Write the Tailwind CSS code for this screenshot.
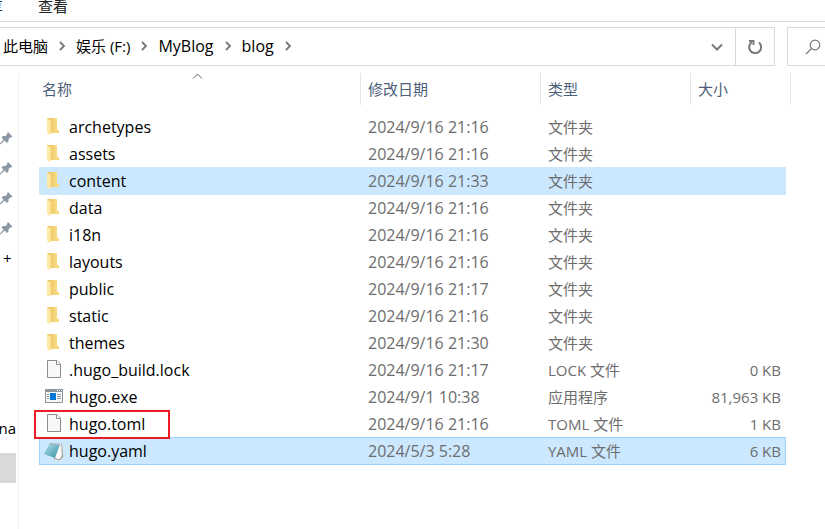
<!DOCTYPE html>
<html lang="zh-CN">
<head>
<meta charset="utf-8">
<title>blog</title>
<script src="https://cdn.jsdelivr.net/npm/@tailwindcss/browser@4"></script>
</head>
<body class="bg-white font-['Open_Sans','Noto_Sans_CJK_SC',sans-serif] text-[15px] leading-5 text-black">
<svg class="absolute size-0" aria-hidden="true">
  <defs>
    <linearGradient id="gold" x1="0" y1="0" x2="1" y2="0"><stop offset="0" stop-color="#e8bf5c"/><stop offset="1" stop-color="#fbdc82"/></linearGradient>
    <linearGradient id="teal" x1="0" y1="0" x2="1" y2="1"><stop offset="0" stop-color="#b3dde5"/><stop offset="1" stop-color="#3596a8"/></linearGradient>
  </defs>
  <symbol id="folder" viewBox="0 0 20 19">
    <path d="M3 1H13V16H6L3 15Z" fill="url(#gold)"/>
    <path d="M13 12.500l2 1V16h-2z" fill="#f9d572"/>
    <path d="M3 1L7 4V16L5.500 18L3 16Z" fill="#ffe9a6"/>
    <path d="M6.500 4V16.500" stroke="#fbdf8c"/>
  </symbol>
  <symbol id="file" viewBox="0 0 20 19">
    <path d="M3.500 .5H13L16.500 4V17.500H3.500Z" fill="#f8f8f8" stroke="#8c8c8c"/>
    <path d="M12.500 .5V4.500H16.500" fill="#fff" stroke="#8c8c8c"/>
  </symbol>
  <symbol id="exe" viewBox="0 0 20 19">
    <path d="M1.500 2.500H18.500V15.500H1.500Z" fill="#f8f8f8" stroke="#8b969b"/>
    <path d="M1 2H19V5H1Z" fill="#8b969b"/>
    <path d="M13 3.500h1M15 3.500h1M17 3.500h1" stroke="#fff"/>
    <path d="M6 6h6v7H6z" fill="#0078d7"/>
    <path d="M3 7.500h2M3 9.500h2M3 11.500h2M13 7.500h4M13 9.500h4M13 11.500h4" stroke="#8b969b"/>
  </symbol>
  <symbol id="note" viewBox="0 0 20 19">
    <path d="M13 3L18 1.500L19 15L16 18L10 17Z" fill="#9b8c6d"/>
    <path d="M16 2L17.500 2L18 14L16 17L10 16Z" fill="#e8f0f1"/>
    <path d="M6 1L16 2L11 16L0 12Z" fill="url(#teal)"/>
    <path d="M6 1L16 2L15.500 3.500L5.500 2.500Z" fill="#a8b8bc"/>
    <path d="M16 4L17 14L15 17L11.500 16Z" fill="#fff"/>
  </symbol>
  <symbol id="pin" viewBox="0 0 13 13">
    <path d="M8 0L12.500 4.500L11 5.500L10.500 5.200L8.500 7.200V9.500L7 11L4.500 8.500L1 12L0 12.500V11.500L3.500 7.500L1.500 5.500L3 4H5.500L7.500 2L7 1.200Z" fill="#8b98a3"/>
  </symbol>
  <symbol id="chevron" viewBox="0 0 8 10">
    <path d="M2 1L6 5L2 9" fill="none" stroke="#777" stroke-width="1.800"/>
  </symbol>
</svg>

<div class="flex min-h-screen flex-col overflow-hidden">
  <nav class="flex h-[22px] shrink-0 gap-[35px] overflow-hidden border-b border-[#dadbdc]" aria-label="功能区">
    <button class="-mt-1 -ml-3 h-5 text-[#1e395b]">享</button>
    <button class="-mt-1 h-5 text-[#222]">查看</button>
  </nav>

  <div class="mt-[5px] flex h-[39px] shrink-0 gap-3">
    <div class="flex min-w-0 flex-1 border border-l-0 border-[#d9d9d9]">
      <nav class="flex flex-1 items-center pb-[2px] pl-[3px]" aria-label="地址">
        <a href="#">此电脑</a>
        <svg class="mx-[10px] h-[10px] w-2"><use href="#chevron"/></svg>
        <a href="#">娱乐 (F:)</a>
        <svg class="mx-[10px] h-[10px] w-2"><use href="#chevron"/></svg>
        <a href="#" class="text-base leading-5">MyBlog</a>
        <svg class="mx-[10px] h-[10px] w-2"><use href="#chevron"/></svg>
        <a href="#" class="text-base leading-5">blog</a>
        <svg class="mx-[10px] h-[10px] w-2"><use href="#chevron"/></svg>
      </nav>
      <button class="flex w-9 items-center justify-center" aria-label="以前的位置">
        <svg class="h-2 w-3" viewBox="0 0 12 8"><path d="M1 1.500L6 6.500L11 1.500" fill="none" stroke="#777" stroke-width="2"/></svg>
      </button>
      <button class="flex w-[39px] items-center justify-center border-l border-[#d9d9d9]" aria-label="刷新">
        <svg class="size-4" viewBox="0 0 16 16"><path d="M12 3.500A6 6 0 1 1 5 3" fill="none" stroke="#777" stroke-width="2"/><path d="M2 2H6.500V6" fill="none" stroke="#777" stroke-width="1.800"/></svg>
      </button>
    </div>
    <div class="flex w-[38px] items-center justify-end border border-r-0 border-[#d9d9d9] pr-[4px]">
      <button aria-label="搜索"><svg class="size-4" viewBox="0 0 16 16"><path d="M6.500 9.500L1 15" stroke="#777" stroke-width="1.300"/><circle cx="10" cy="6" r="4.800" fill="none" stroke="#777" stroke-width="1.200"/></svg></button>
    </div>
  </div>

  <div class="mt-[7px] flex flex-1">
    <aside class="w-[19px] shrink-0 overflow-hidden border-r border-[#f2f2f2] pt-[50px]">
      <div class="flex h-[30px] items-center"><svg class="size-[13px]"><use href="#pin"/></svg></div>
      <div class="flex h-[30px] items-center"><svg class="size-[13px]"><use href="#pin"/></svg></div>
      <div class="flex h-[30px] items-center"><svg class="size-[13px]"><use href="#pin"/></svg></div>
      <div class="flex h-[30px] items-center"><svg class="size-[13px]"><use href="#pin"/></svg></div>
      <div class="flex h-[30px] items-center pl-[3px]">+</div>
      <div class="mt-[140px] flex h-[30px] items-center justify-end pr-[2px]">na</div>
      <div class="mt-[10px] mr-[2px] h-[30px] bg-[#d9d9d9]"></div>
    </aside>

    <main class="min-w-0 flex-1 pr-[34px] pl-5">
      <table class="w-full table-fixed border-separate border-spacing-0 text-left text-[#6d6d6d]">
        <colgroup><col><col class="w-[180px]"><col class="w-[150px]"><col class="w-[95px]"><col class="w-[5px]"></colgroup>
        <thead class="text-[#4c607a]">
          <tr class="h-8">
            <th class="relative border-r border-[#e5e5e5] p-0 pl-[3px] font-normal">
              <button>名称</button>
              <svg class="absolute top-0 left-[153px] h-[6px] w-[11px]" viewBox="0 0 11 6"><path d="M1 5.500L5.500 1L10 5.500" fill="none" stroke="#666"/></svg>
            </th>
            <th class="border-r border-[#e5e5e5] p-0 pl-[7px] font-normal"><button>修改日期</button></th>
            <th class="border-r border-[#e5e5e5] p-0 pl-[7px] font-normal"><button>类型</button></th>
            <th colspan="2" class="border-r border-[#e5e5e5] p-0 pl-[7px] font-normal"><button>大小</button></th>
          </tr>
        </thead>
        <tbody>
          <tr class="h-2"><td colspan="5" class="p-0"></td></tr>
          <tr class="h-[27px]"><td class="p-0 pl-[5px]"><div class="flex items-center gap-[5px]"><svg class="h-[19px] w-5"><use href="#folder"/></svg><a href="#" class="text-base leading-5 text-black">archetypes</a></div></td><td class="p-0 pl-[7px] text-base leading-5">2024/9/16 21:16</td><td class="p-0 pl-[7px]">文件夹</td><td class="p-0"></td></tr>
          <tr class="h-[27px]"><td class="p-0 pl-[5px]"><div class="flex items-center gap-[5px]"><svg class="h-[19px] w-5"><use href="#folder"/></svg><a href="#" class="text-base leading-5 text-black">assets</a></div></td><td class="p-0 pl-[7px] text-base leading-5">2024/9/16 21:16</td><td class="p-0 pl-[7px]">文件夹</td><td class="p-0"></td></tr>
          <tr class="h-[27px] *:bg-[#cce8ff] *:shadow-[0_1px_0_#cce8ff]"><td class="p-0 pl-[5px]"><div class="flex items-center gap-[5px]"><svg class="h-[19px] w-5"><use href="#folder"/></svg><a href="#" class="text-base leading-5 text-black">content</a></div></td><td class="p-0 pl-[7px] text-base leading-5">2024/9/16 21:33</td><td class="p-0 pl-[7px]">文件夹</td><td class="p-0"></td></tr>
          <tr class="h-[27px]"><td class="p-0 pl-[5px]"><div class="flex items-center gap-[5px]"><svg class="h-[19px] w-5"><use href="#folder"/></svg><a href="#" class="text-base leading-5 text-black">data</a></div></td><td class="p-0 pl-[7px] text-base leading-5">2024/9/16 21:16</td><td class="p-0 pl-[7px]">文件夹</td><td class="p-0"></td></tr>
          <tr class="h-[27px]"><td class="p-0 pl-[5px]"><div class="flex items-center gap-[5px]"><svg class="h-[19px] w-5"><use href="#folder"/></svg><a href="#" class="text-base leading-5 text-black">i18n</a></div></td><td class="p-0 pl-[7px] text-base leading-5">2024/9/16 21:16</td><td class="p-0 pl-[7px]">文件夹</td><td class="p-0"></td></tr>
          <tr class="h-[27px]"><td class="p-0 pl-[5px]"><div class="flex items-center gap-[5px]"><svg class="h-[19px] w-5"><use href="#folder"/></svg><a href="#" class="text-base leading-5 text-black">layouts</a></div></td><td class="p-0 pl-[7px] text-base leading-5">2024/9/16 21:16</td><td class="p-0 pl-[7px]">文件夹</td><td class="p-0"></td></tr>
          <tr class="h-[27px]"><td class="p-0 pl-[5px]"><div class="flex items-center gap-[5px]"><svg class="h-[19px] w-5"><use href="#folder"/></svg><a href="#" class="text-base leading-5 text-black">public</a></div></td><td class="p-0 pl-[7px] text-base leading-5">2024/9/16 21:17</td><td class="p-0 pl-[7px]">文件夹</td><td class="p-0"></td></tr>
          <tr class="h-[27px]"><td class="p-0 pl-[5px]"><div class="flex items-center gap-[5px]"><svg class="h-[19px] w-5"><use href="#folder"/></svg><a href="#" class="text-base leading-5 text-black">static</a></div></td><td class="p-0 pl-[7px] text-base leading-5">2024/9/16 21:16</td><td class="p-0 pl-[7px]">文件夹</td><td class="p-0"></td></tr>
          <tr class="h-[27px]"><td class="p-0 pl-[5px]"><div class="flex items-center gap-[5px]"><svg class="h-[19px] w-5"><use href="#folder"/></svg><a href="#" class="text-base leading-5 text-black">themes</a></div></td><td class="p-0 pl-[7px] text-base leading-5">2024/9/16 21:30</td><td class="p-0 pl-[7px]">文件夹</td><td class="p-0"></td></tr>
          <tr class="h-[27px]"><td class="p-0 pl-[5px]"><div class="flex items-center gap-[5px]"><svg class="h-[19px] w-5"><use href="#file"/></svg><a href="#" class="text-base leading-5 text-black">.hugo_build.lock</a></div></td><td class="p-0 pl-[7px] text-base leading-5">2024/9/16 21:17</td><td class="p-0 pl-[7px]">LOCK 文件</td><td class="p-0 pr-[5px] text-right">0 KB</td></tr>
          <tr class="h-[27px]"><td class="p-0 pl-[5px]"><div class="flex items-center gap-[5px]"><svg class="h-[19px] w-5"><use href="#exe"/></svg><a href="#" class="text-base leading-5 text-black">hugo.exe</a></div></td><td class="p-0 pl-[7px] text-base leading-5">2024/9/1 10:38</td><td class="p-0 pl-[7px]">应用程序</td><td class="p-0 pr-[5px] text-right">81,963 KB</td></tr>
          <tr class="h-[27px]"><td class="relative z-10 p-0 pl-[5px]"><div class="flex items-center gap-[5px]"><svg class="h-[19px] w-5"><use href="#file"/></svg><a href="#" class="text-base leading-5 text-black">hugo.toml</a></div><span class="absolute top-0 -left-[5px] h-[29px] w-[136px] border-2 border-[#ed1c24]"></span></td><td class="p-0 pl-[7px] text-base leading-5">2024/9/16 21:16</td><td class="p-0 pl-[7px]">TOML 文件</td><td class="p-0 pr-[5px] text-right">1 KB</td></tr>
          <tr class="h-7 *:border-y *:border-[#99d1ff] *:bg-[#cce8ff]"><td class="border-l p-0 pl-1"><div class="flex items-center gap-[5px]"><svg class="h-[19px] w-5"><use href="#note"/></svg><a href="#" class="text-base leading-5 text-black">hugo.yaml</a></div></td><td class="p-0 pl-[7px] text-base leading-5">2024/5/3 5:28</td><td class="p-0 pl-[7px]">YAML 文件</td><td class="border-r p-0 pr-1 text-right">6 KB</td></tr>
        </tbody>
      </table>
    </main>
  </div>
</div>
</body>
</html>
